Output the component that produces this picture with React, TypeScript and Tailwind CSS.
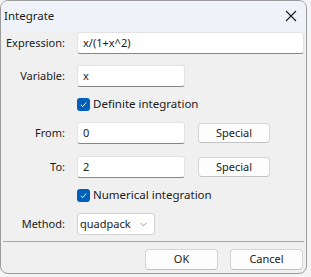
import { ChevronDown } from "lucide-react";

const font = { fontFamily: '"Noto Sans", "Liberation Sans", sans-serif' };

function Label({ text }: { text: string }) {
  return <div className="w-[64px] shrink-0 text-right">{text}</div>;
}

function TextBox({ value, width }: { value: string; width: string }) {
  return (
    <div
      className={`${width} ml-[12px] flex h-[22px] items-center rounded-[3px] border border-[#e3e3e3] border-b-[#868686] bg-white pl-[5px] text-[#1b1b1b]`}
    >
      {value}
    </div>
  );
}

function Button({ label, className = "" }: { label: string; className?: string }) {
  return (
    <div
      className={`flex items-center justify-center rounded-[4px] border border-[#d5d5d5] border-b-[#c2c2c2] bg-[#fdfdfd] text-[#1b1b1b] ${className}`}
    >
      {label}
    </div>
  );
}

function Check({ label }: { label: string }) {
  return (
    <div className="flex h-[22px] items-center pl-[76px]">
      <div className="flex h-[13px] w-[13px] items-center justify-center rounded-[3px] bg-[#005fb8]">
        <svg width="9" height="9" viewBox="0 0 9 9">
          <path d="M1.8 4.8 L3.7 6.6 L7.2 2.6" stroke="white" strokeWidth="1" fill="none" />
        </svg>
      </div>
      <span className="ml-[3px] text-[11.5px]">{label}</span>
    </div>
  );
}

export default function App() {
  return (
    <div className="h-[277px] w-[311px] bg-[#f4f4f4]" style={font}>
      <div className="flex h-[274px] w-[307px] flex-col overflow-hidden rounded-[8px] border border-[#9c9c9c] bg-[#f0f0f0] text-[11px] text-[#1b1b1b]">
        {/* title bar */}
        <div className="flex h-[30px] shrink-0 items-center justify-between bg-[#eff3f9] pl-[3px] pr-[5px]">
          <span className="text-[11.5px]">Integrate</span>
          <svg width="12" height="12" viewBox="0 0 12 12" className="mr-[4px]">
            <path d="M1 1 L11 11 M11 1 L1 11" stroke="#1b1b1b" strokeWidth="1.1" />
          </svg>
        </div>

        <div className="mt-[1px] flex h-[22px] items-center">
          <Label text="Expression:" />
          <TextBox value="x/(1+x^2)" width="w-[227px]" />
        </div>

        <div className="mt-[11px] flex h-[22px] items-center">
          <Label text="Variable:" />
          <TextBox value="x" width="w-[108px]" />
        </div>

        <div className="mt-[6px]">
          <Check label="Definite integration" />
        </div>

        <div className="mt-[7px] flex h-[22px] items-center">
          <Label text="From:" />
          <TextBox value="0" width="w-[108px]" />
          <Button label="Special" className="ml-[13px] h-[20px] w-[72px]" />
        </div>

        <div className="mt-[12px] flex h-[22px] items-center">
          <Label text="To:" />
          <TextBox value="2" width="w-[108px]" />
          <Button label="Special" className="ml-[13px] h-[20px] w-[72px]" />
        </div>

        <div className="mt-[6px]">
          <Check label="Numerical integration" />
        </div>

        <div className="mt-[7px] flex h-[22px] items-center">
          <Label text="Method:" />
          <div className="ml-[12px] flex h-[22px] w-[78px] items-center justify-between rounded-[3px] border border-[#d0d0d0] bg-white pl-[2px] pr-[5px]">
            <span>quadpack</span>
            <ChevronDown size={11} strokeWidth={1.3} color="#555" />
          </div>
        </div>

        <div className="mx-[2px] mt-[6px] h-px bg-[#a6a6a6]" />

        <div className="mt-[7px] flex justify-end pr-[3px]">
          <Button label="OK" className="h-[21px] w-[73px]" />
          <Button label="Cancel" className="ml-[12px] h-[21px] w-[73px]" />
        </div>
      </div>
    </div>
  );
}
